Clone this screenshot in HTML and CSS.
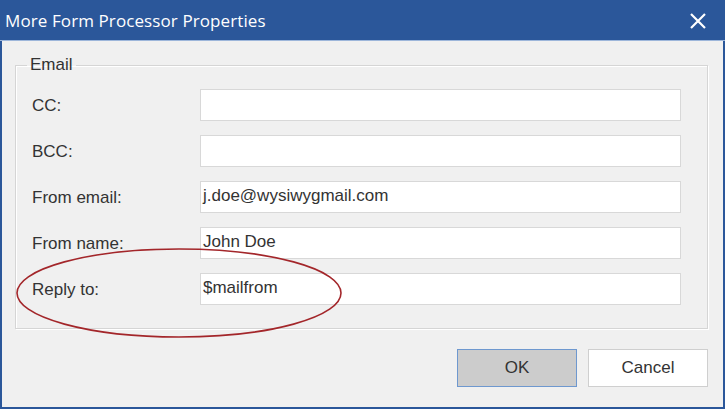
FILE: index.html
```html
<!DOCTYPE html>
<html lang="en">
<head>
    <meta charset="UTF-8">
    <title>More Form Processor Properties</title>
    <link rel="stylesheet" href="styles.css">
</head>
<body>
    <div class="window">
        <div class="titlebar">
            <span class="title">More Form Processor Properties</span>
            <svg class="close" width="16" height="16" viewBox="0 0 16 16">
                <path d="M1 1 L15 15 M15 1 L1 15" stroke="#fff" stroke-width="2.2" fill="none"/>
            </svg>
        </div>
        <div class="content">
            <fieldset class="group">
                <legend>Email</legend>
                <div class="row">
                    <label>CC:</label>
                    <div class="field"></div>
                </div>
                <div class="row">
                    <label>BCC:</label>
                    <div class="field"></div>
                </div>
                <div class="row">
                    <label>From email:</label>
                    <div class="field">j.doe@wysiwygmail.com</div>
                </div>
                <div class="row">
                    <label>From name:</label>
                    <div class="field">John Doe</div>
                </div>
                <div class="row">
                    <label>Reply to:</label>
                    <div class="field">$mailfrom</div>
                </div>
            </fieldset>
            <div class="buttons">
                <button class="btn btn-ok">OK</button>
                <button class="btn">Cancel</button>
            </div>
            <svg class="marker" width="340" height="100" viewBox="0 0 340 100">
                <ellipse cx="170" cy="50" rx="162" ry="44" fill="none" stroke="#a3262a" stroke-width="1.6"/>
            </svg>
        </div>
    </div>
</body>
</html>
```

FILE: styles.css
```css
body {
    margin: 0;
    background: #ffffff;
    font-family: 'Liberation Sans', Arial, sans-serif;
}
.window {
    width: 725px;
    height: 409px;
    box-sizing: border-box;
    border: 2px solid #2b579a;
    border-top: 0;
    background: #f0f0f0;
    display: flex;
    flex-direction: column;
}
.titlebar {
    height: 40px;
    background: #2b579a;
    border-bottom: 1px solid #9db6da;
    display: flex;
    align-items: center;
    justify-content: space-between;
    padding: 0 19px 0 5px;
    margin: 0 -2px;
}
.title {
    color: #ffffff;
    font-family: 'Open Sans', sans-serif;
    font-size: 17px;
    letter-spacing: 0.1px;
}
.close {
    margin-top: 1px;
}
.content {
    position: relative;
    flex: 1;
    padding: 14px 15px 0 13px;
}
.group {
    margin: 0;
    border: 1px solid #d5d5d5;
    box-shadow: inset 1px 1px 0 #ffffff, 1px 1px 0 #ffffff;
    padding: 14px 26px 23px 16px;
    display: flex;
    flex-direction: column;
    gap: 14px;
}
legend {
    font-size: 17px;
    color: #333333;
    padding: 0 3px;
    margin-left: -5px;
}
.row {
    display: flex;
    align-items: center;
}
.row label {
    width: 168px;
    font-size: 17px;
    color: #333333;
    padding-top: 2px;
}
.field {
    flex: 1;
    height: 32px;
    box-sizing: border-box;
    background: #ffffff;
    border: 1px solid #d8d8d8;
    padding: 4px 2px;
    font-size: 17px;
    color: #333333;
}
.buttons {
    display: flex;
    justify-content: flex-end;
    gap: 11px;
    margin-top: 20px;
}
.btn {
    width: 120px;
    height: 38px;
    font-family: 'Liberation Sans', Arial, sans-serif;
    font-size: 17px;
    color: #333333;
    background: #ffffff;
    border: 1px solid #cfcfcf;
}
.btn-ok {
    background: #cccccc;
    border-color: #6e98cf;
}
.marker {
    position: absolute;
    left: 7px;
    top: 202px;
}
```
